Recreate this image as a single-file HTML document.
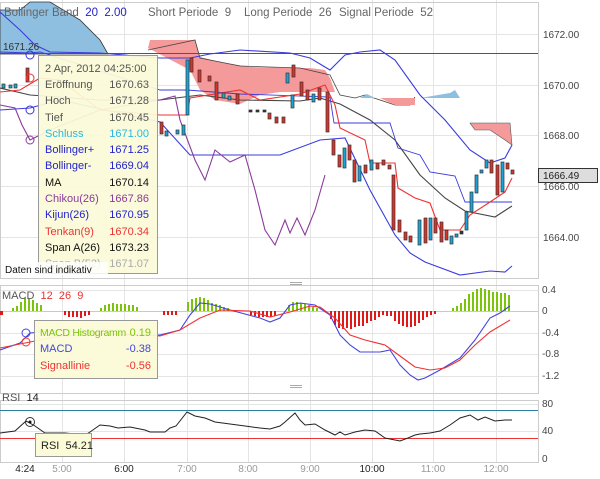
<!DOCTYPE html>
<html><head><meta charset="utf-8"><style>
html,body{margin:0;padding:0;background:#fff}
svg{display:block;font-family:"Liberation Sans",sans-serif}
</style></head><body>
<svg width="600" height="479" viewBox="0 0 600 479" xmlns="http://www.w3.org/2000/svg">
<rect width="600" height="479" fill="#fff"/>
<g stroke="#e4e4e4" stroke-width="1">
<line x1="0" y1="34.5" x2="538" y2="34.5"/><line x1="0" y1="85.5" x2="538" y2="85.5"/><line x1="0" y1="135.5" x2="538" y2="135.5"/><line x1="0" y1="186.5" x2="538" y2="186.5"/><line x1="0" y1="237.5" x2="538" y2="237.5"/>
<line x1="62.5" y1="0" x2="62.5" y2="462"/><line x1="124.5" y1="0" x2="124.5" y2="462"/><line x1="187.5" y1="0" x2="187.5" y2="462"/><line x1="248.5" y1="0" x2="248.5" y2="462"/><line x1="310.5" y1="0" x2="310.5" y2="462"/><line x1="372.5" y1="0" x2="372.5" y2="462"/><line x1="433.5" y1="0" x2="433.5" y2="462"/><line x1="496.5" y1="0" x2="496.5" y2="462"/>
<line x1="0" y1="290.5" x2="538" y2="290.5"/><line x1="0" y1="333.5" x2="538" y2="333.5"/><line x1="0" y1="354.5" x2="538" y2="354.5"/><line x1="0" y1="376.5" x2="538" y2="376.5"/>
<line x1="0" y1="404.5" x2="538" y2="404.5"/><line x1="0" y1="431.5" x2="538" y2="431.5"/>
</g>
<g stroke="#ccc" fill="none"><rect x="0.5" y="2.5" width="538" height="276"/><rect x="0.5" y="285.5" width="538" height="108"/><rect x="0.5" y="400.5" width="538" height="62"/></g>
<path d="M0,10 L20,10 L30,2 L50,2 L80,20 L100,40 L108,54 L0,54 Z" fill="#8fbfe0" stroke="#333" stroke-width="0.8"/>
<path d="M148,48 L150,40 L195,40 L200,57 L220,62 L250,67 L290,68 L310,68 L325,70 L330,78 L335,92 L280,92 L260,95 L240,104 L215,100 L200,90 L190,70 Z" fill="#f49a9a"/>
<path d="M148,50 L195,40 L200,58 L240,66 L300,68 L330,75 L340,95 L355,98 L365,95 L380,100 L395,105 L410,105 L415,97" fill="none" stroke="#444" stroke-width="0.8"/>
<path d="M380,98 L415,98 L415,105 L395,105 Z" fill="#f49a9a"/>
<path d="M360,98 L367,94 L375,98 Z M420,98 L450,93 L455,90 L460,98 Z" fill="#8fbfe0"/>
<path d="M470,123 L510,123 L512,145 L505,140 L490,130 L475,130 Z" fill="#f49a9a" stroke="#555" stroke-width="0.6"/>
<line x1="0" y1="53.5" x2="538" y2="53.5" stroke="#555"/>
<g fill="none" stroke-width="1.1">
<path d="M0,12 L20,30 L35,45 L50,52 L100,53 L160,58 L190,58 L210,54 L240,50 L290,53 L310,58 L330,70 L345,55 L360,52 L380,50 L395,60 L420,95 L445,120 L470,150 L490,163 L505,158 L512,145" stroke="#3b3bde"/>
<path d="M0,110 L30,108 L60,100 L160,122 L190,155 L280,155 L320,140 L345,138 L370,190 L395,235 L410,253 L425,262 L460,275 L490,271 L505,272 L512,266" stroke="#3b3bde"/>
<path d="M0,88 L30,95 L100,100 L160,100 L200,95 L240,100 L300,101 L320,98 L340,104 L370,120 L395,140 L420,175 L445,198 L465,211 L495,217 L512,206" stroke="#444"/>
<path d="M0,52 L30,53 L40,52 L160,90 L187,90 L240,94 L330,97 L334,123 L390,123 L398,148 L420,155 L430,172 L455,176 L465,202 L512,202" stroke="#3b3bde" stroke-width="0.9"/>
<path d="M0,92 L20,90 L40,78 L60,80 L100,110 L160,115 L187,115 L190,98 L240,90 L260,100 L300,94 L325,85 L335,105 L340,128 L365,140 L370,163 L395,163 L398,188 L415,198 L430,203 L440,230 L460,230 L470,215 L490,202 L505,192 L512,178" stroke="#e33"/>
<path d="M0,105 L15,108 L22,125 L30,140 L50,130 L100,110 L160,100 L175,96 L180,120 L195,160 L205,180 L215,150 L230,162 L245,155 L255,190 L265,230 L275,245 L285,220 L290,233 L297,218 L305,235 L315,210 L325,175" stroke="#8a3a9a"/>
</g>
<g stroke="#333" stroke-width="0.7">
<rect x="2" y="84" width="3" height="4" fill="#1aa3d9"/><rect x="9" y="85" width="3" height="3" fill="#1aa3d9"/><rect x="14" y="84" width="3" height="4" fill="#1aa3d9"/><rect x="26" y="68" width="3" height="14" fill="#d9342b"/>
<rect x="160" y="122" width="3" height="12" fill="#d9342b"/><rect x="165" y="131" width="3" height="5" fill="#1aa3d9"/><rect x="176" y="130" width="3" height="4" fill="#1aa3d9"/><rect x="182" y="125" width="3" height="10" fill="#1aa3d9"/>
<rect x="186" y="60" width="3" height="55" fill="#1aa3d9"/><rect x="190" y="58" width="3" height="14" fill="#d9342b"/><rect x="198" y="70" width="3" height="12" fill="#d9342b"/><rect x="208" y="76" width="3" height="5" fill="#d9342b"/><rect x="215" y="82" width="3" height="18" fill="#d9342b"/><rect x="222" y="93" width="3" height="5" fill="#1aa3d9"/><rect x="228" y="96" width="3" height="4" fill="#1aa3d9"/><rect x="236" y="94" width="3" height="10" fill="#d9342b"/><rect x="249" y="110" width="3" height="2" fill="#333"/><rect x="256" y="110" width="3" height="2" fill="#333"/><rect x="263" y="110" width="3" height="2" fill="#333"/><rect x="268" y="113" width="3" height="6" fill="#d9342b"/><rect x="275" y="117" width="3" height="6" fill="#d9342b"/><rect x="282" y="117" width="3" height="6" fill="#d9342b"/><rect x="291" y="95" width="3" height="13" fill="#1aa3d9"/><rect x="286" y="73" width="3" height="10" fill="#1aa3d9"/><rect x="292" y="65" width="3" height="12" fill="#d9342b"/><rect x="300" y="82" width="3" height="14" fill="#d9342b"/><rect x="306" y="90" width="3" height="10" fill="#d9342b"/><rect x="312" y="94" width="3" height="8" fill="#1aa3d9"/><rect x="318" y="88" width="3" height="12" fill="#d9342b"/>
<rect x="326" y="92" width="3" height="40" fill="#d9342b"/><rect x="332" y="140" width="3" height="15" fill="#d9342b"/><rect x="338" y="155" width="3" height="12" fill="#d9342b"/><rect x="343" y="148" width="3" height="20" fill="#1aa3d9"/><rect x="348" y="145" width="3" height="15" fill="#d9342b"/><rect x="353" y="160" width="3" height="22" fill="#d9342b"/><rect x="358" y="166" width="3" height="15" fill="#1aa3d9"/><rect x="364" y="165" width="3" height="8" fill="#d9342b"/><rect x="370" y="160" width="3" height="10" fill="#1aa3d9"/><rect x="376" y="163" width="3" height="6" fill="#d9342b"/><rect x="382" y="160" width="3" height="5" fill="#d9342b"/><rect x="388" y="165" width="3" height="4" fill="#d9342b"/>
<rect x="392" y="175" width="3" height="55" fill="#d9342b"/><rect x="398" y="220" width="3" height="12" fill="#d9342b"/><rect x="404" y="232" width="3" height="8" fill="#d9342b"/><rect x="409" y="236" width="3" height="6" fill="#d9342b"/><rect x="418" y="220" width="3" height="25" fill="#1aa3d9"/><rect x="424" y="218" width="3" height="25" fill="#d9342b"/><rect x="429" y="218" width="3" height="22" fill="#1aa3d9"/><rect x="434" y="218" width="3" height="15" fill="#d9342b"/><rect x="440" y="222" width="3" height="20" fill="#d9342b"/><rect x="445" y="230" width="3" height="10" fill="#d9342b"/><rect x="450" y="236" width="3" height="8" fill="#1aa3d9"/><rect x="455" y="234" width="3" height="3" fill="#1aa3d9"/><rect x="460" y="231" width="3" height="3" fill="#333"/><rect x="465" y="212" width="3" height="18" fill="#1aa3d9"/><rect x="470" y="192" width="3" height="20" fill="#1aa3d9"/><rect x="475" y="175" width="3" height="18" fill="#1aa3d9"/><rect x="480" y="170" width="3" height="3" fill="#1aa3d9"/><rect x="485" y="160" width="3" height="8" fill="#1aa3d9"/><rect x="490" y="160" width="3" height="13" fill="#d9342b"/><rect x="496" y="165" width="3" height="30" fill="#d9342b"/><rect x="501" y="162" width="3" height="30" fill="#1aa3d9"/><rect x="506" y="163" width="3" height="6" fill="#d9342b"/><rect x="511" y="170" width="3" height="4" fill="#d9342b"/>
</g>
<g fill="none" stroke-width="1"><circle cx="30" cy="55" r="4" stroke="#33d"/><circle cx="30" cy="110" r="4" stroke="#33d"/><circle cx="30" cy="140" r="4" stroke="#8a3a9a"/><circle cx="30" cy="78" r="4" stroke="#e33"/></g>
<text x="3" y="50" font-size="10" fill="#333">1671.26</text>
<g font-size="11.5" fill="#666">
<text x="4" y="16" xml:space="preserve">Bollinger Band  <tspan fill="#22c">20  2.00</tspan></text>
<text x="148" y="16" xml:space="preserve">Short Periode  9</text>
<text x="244" y="16" xml:space="preserve">Long Periode  26</text>
<text x="339" y="16" xml:space="preserve">Signal Periode  52</text>
</g>
<rect x="38.5" y="55.5" width="119" height="218" fill="#fbfbd8" fill-opacity="0.93" stroke="#999"/>
<g font-size="11">
<text x="45" y="72" fill="#555">2 Apr, 2012 04:25:00</text>
<text x="45" y="88" fill="#555">Eröffnung</text><text x="149" y="88" fill="#555" text-anchor="end">1670.63</text>
<text x="45" y="104" fill="#555">Hoch</text><text x="149" y="104" fill="#555" text-anchor="end">1671.28</text>
<text x="45" y="121" fill="#555">Tief</text><text x="149" y="121" fill="#555" text-anchor="end">1670.45</text>
<text x="45" y="137" fill="#2ab8e0">Schluss</text><text x="149" y="137" fill="#2ab8e0" text-anchor="end">1671.00</text>
<text x="45" y="153" fill="#22c">Bollinger+</text><text x="149" y="153" fill="#22c" text-anchor="end">1671.25</text>
<text x="45" y="169" fill="#22c">Bollinger-</text><text x="149" y="169" fill="#22c" text-anchor="end">1669.04</text>
<text x="45" y="186" fill="#111">MA</text><text x="149" y="186" fill="#111" text-anchor="end">1670.14</text>
<text x="45" y="202" fill="#8a3a9a">Chikou(26)</text><text x="149" y="202" fill="#8a3a9a" text-anchor="end">1667.86</text>
<text x="45" y="218" fill="#22c">Kijun(26)</text><text x="149" y="218" fill="#22c" text-anchor="end">1670.95</text>
<text x="45" y="235" fill="#e33">Tenkan(9)</text><text x="149" y="235" fill="#e33" text-anchor="end">1670.34</text>
<text x="45" y="251" fill="#111">Span A(26)</text><text x="149" y="251" fill="#111" text-anchor="end">1673.23</text>
<text x="45" y="267" fill="#aaa">Span B(52)</text><text x="149" y="267" fill="#aaa" text-anchor="end">1671.07</text>
</g>
<rect x="3" y="262" width="105" height="13" fill="#fff" fill-opacity="0.85"/>
<text x="5" y="273" font-size="10" fill="#111">Daten sind indikativ</text>
<g font-size="10" fill="#444"><text x="543" y="38">1672.00</text><text x="543" y="89">1670.00</text><text x="543" y="139">1668.00</text><text x="543" y="190">1666.00</text><text x="543" y="241">1664.00</text></g>
<rect x="538.5" y="168.5" width="59" height="14" fill="#ddd" stroke="#333"/>
<text x="543" y="179" font-size="10" fill="#222">1666.49</text>
<g stroke="#aaa"><line x1="290" y1="282.5" x2="302" y2="282.5"/><line x1="290" y1="284.5" x2="302" y2="284.5"/><line x1="290" y1="385.5" x2="302" y2="385.5"/><line x1="290" y1="387.5" x2="302" y2="387.5"/></g>
<line x1="0" y1="311.5" x2="538" y2="311.5" stroke="#bcd"/>
<g fill="#7cc40a"><rect x="12" y="308" width="2" height="3"/><rect x="16" y="306" width="2" height="5"/><rect x="20" y="302" width="2" height="9"/><rect x="24" y="298" width="2" height="13"/><rect x="28" y="299" width="2" height="12"/><rect x="32" y="300" width="2" height="11"/><rect x="36" y="303" width="2" height="8"/><rect x="40" y="305" width="2" height="6"/><rect x="100" y="308" width="2" height="3"/><rect x="104" y="305" width="2" height="6"/><rect x="108" y="304" width="2" height="7"/><rect x="112" y="303" width="2" height="8"/><rect x="116" y="304" width="2" height="7"/><rect x="120" y="304" width="2" height="7"/><rect x="124" y="304" width="2" height="7"/><rect x="128" y="305" width="2" height="6"/><rect x="132" y="305" width="2" height="6"/><rect x="136" y="307" width="2" height="4"/>
<rect x="187" y="302" width="2" height="9"/><rect x="191" y="299" width="2" height="12"/><rect x="195" y="298" width="2" height="13"/><rect x="199" y="297" width="2" height="14"/><rect x="203" y="298" width="2" height="13"/><rect x="207" y="300" width="2" height="11"/><rect x="211" y="303" width="2" height="8"/><rect x="215" y="304" width="2" height="7"/><rect x="219" y="305" width="2" height="6"/><rect x="223" y="307" width="2" height="4"/><rect x="227" y="308" width="2" height="3"/>
<rect x="288" y="305" width="2" height="6"/><rect x="292" y="302" width="2" height="9"/><rect x="296" y="302" width="2" height="9"/><rect x="300" y="303" width="2" height="8"/><rect x="304" y="304" width="2" height="7"/><rect x="308" y="305" width="2" height="6"/><rect x="312" y="307" width="2" height="4"/><rect x="316" y="308" width="2" height="3"/>
<rect x="452" y="308" width="2" height="3"/><rect x="456" y="306" width="2" height="5"/><rect x="460" y="303" width="2" height="8"/><rect x="464" y="299" width="2" height="12"/><rect x="468" y="294" width="2" height="17"/><rect x="472" y="292" width="2" height="19"/><rect x="476" y="289" width="2" height="22"/><rect x="480" y="288" width="2" height="23"/><rect x="484" y="289" width="2" height="22"/><rect x="488" y="290" width="2" height="21"/><rect x="492" y="292" width="2" height="19"/><rect x="496" y="292" width="2" height="19"/><rect x="500" y="293" width="2" height="18"/><rect x="504" y="293" width="2" height="18"/><rect x="508" y="295" width="2" height="16"/></g>
<g fill="#e01818"><rect x="0" y="311" width="3" height="4"/><rect x="64" y="311" width="2" height="4"/><rect x="68" y="311" width="2" height="6"/><rect x="72" y="311" width="2" height="6"/><rect x="76" y="311" width="2" height="6"/><rect x="80" y="311" width="2" height="7"/><rect x="84" y="311" width="2" height="5"/><rect x="88" y="311" width="2" height="4"/><rect x="163" y="311" width="2" height="4"/><rect x="167" y="311" width="2" height="4"/><rect x="171" y="311" width="2" height="4"/><rect x="175" y="311" width="2" height="4"/>
<rect x="250" y="311" width="2" height="4"/><rect x="254" y="311" width="2" height="5"/><rect x="258" y="311" width="2" height="6"/><rect x="262" y="311" width="2" height="6"/><rect x="266" y="311" width="2" height="6"/><rect x="270" y="311" width="2" height="6"/><rect x="274" y="311" width="2" height="5"/>
<rect x="330" y="311" width="2" height="8"/><rect x="334" y="311" width="2" height="14"/><rect x="338" y="311" width="2" height="17"/><rect x="342" y="311" width="2" height="18"/><rect x="346" y="311" width="2" height="17"/><rect x="350" y="311" width="2" height="18"/><rect x="354" y="311" width="2" height="16"/><rect x="358" y="311" width="2" height="15"/><rect x="362" y="311" width="2" height="15"/><rect x="366" y="311" width="2" height="12"/><rect x="370" y="311" width="2" height="10"/><rect x="374" y="311" width="2" height="9"/><rect x="378" y="311" width="2" height="6"/><rect x="382" y="311" width="2" height="4"/><rect x="386" y="311" width="2" height="5"/><rect x="390" y="311" width="2" height="5"/><rect x="394" y="311" width="2" height="10"/><rect x="398" y="311" width="2" height="13"/><rect x="402" y="311" width="2" height="15"/><rect x="406" y="311" width="2" height="16"/><rect x="410" y="311" width="2" height="16"/><rect x="414" y="311" width="2" height="15"/><rect x="418" y="311" width="2" height="12"/><rect x="422" y="311" width="2" height="9"/><rect x="426" y="311" width="2" height="6"/><rect x="430" y="311" width="2" height="4"/><rect x="434" y="311" width="2" height="3"/></g>
<g fill="none" stroke-width="1.1">
<path d="M0,350 L20,343 L30,333 L60,330 L120,335 L160,335 L180,330 L190,315 L200,303 L210,304 L230,310 L260,318 L270,322 L280,318 L290,305 L300,303 L315,305 L330,315 L340,335 L350,345 L360,352 L380,352 L390,350 L400,365 L410,375 L418,380 L425,378 L440,370 L460,358 L475,340 L490,318 L500,313 L510,306" stroke="#44d"/>
<path d="M0,348 L30,342 L60,336 L120,334 L160,336 L180,330 L200,318 L220,310 L250,311 L270,317 L290,312 L310,306 L320,307 L335,318 L350,335 L365,340 L385,345 L400,356 L415,367 L430,370 L445,368 L460,360 L475,345 L490,332 L510,320" stroke="#e33"/>
</g>
<g font-size="10" fill="#444"><text x="542" y="293">0.4</text><text x="542" y="314">0</text><text x="542" y="336">-0.4</text><text x="542" y="357">-0.8</text><text x="542" y="379">-1.2</text></g>
<text x="2" y="299" font-size="11" fill="#555" xml:space="preserve">MACD  <tspan fill="#e33">12  26  9</tspan></text>
<circle cx="26" cy="333" r="4" fill="none" stroke="#44d"/><circle cx="26" cy="342" r="4" fill="none" stroke="#e33"/>
<rect x="34.5" y="320.5" width="123" height="58" fill="#fbfbd8" fill-opacity="0.95" stroke="#999"/>
<g font-size="11"><text x="40" y="336" fill="#7cc40a" font-size="10.5" letter-spacing="-0.3">MACD Histogramm</text><text x="151" y="336" fill="#7cc40a" text-anchor="end">0.19</text>
<text x="40" y="352" fill="#44d">MACD</text><text x="151" y="352" fill="#44d" text-anchor="end">-0.38</text>
<text x="40" y="369" fill="#e33">Signallinie</text><text x="151" y="369" fill="#e33" text-anchor="end">-0.56</text></g>
<line x1="0" y1="410.5" x2="538" y2="410.5" stroke="#2a7fa0"/>
<line x1="0" y1="438.5" x2="538" y2="438.5" stroke="#e33"/>
<path d="M0,433 L15,431 L26,421 L35,426 L45,433 L55,433 L65,433 L75,434 L80,438 L90,432 L100,425 L110,426 L118,428 L130,427 L145,430 L150,432 L165,432 L170,428 L176,426 L187,412 L195,416 L205,418 L215,422 L230,424 L245,426 L260,428 L270,429 L280,426 L285,422 L295,413 L300,420 L305,425 L315,424 L325,430 L335,435 L340,432 L345,435 L355,432 L365,430 L375,431 L385,438 L400,441 L408,438 L415,435 L420,434 L430,433 L440,431 L450,425 L460,418 L470,415 L478,420 L485,417 L495,421 L505,420 L512,420" fill="none" stroke="#222" stroke-width="1"/>
<circle cx="30" cy="422" r="4.5" fill="none" stroke="#333"/><circle cx="30" cy="422" r="1.5" fill="#111"/>
<g font-size="10" fill="#444"><text x="542" y="407">80</text><text x="542" y="434">40</text><text x="542" y="462">0</text></g>
<text x="2" y="401" font-size="11" fill="#555" xml:space="preserve">RSI  <tspan fill="#222">14</tspan></text>
<rect x="35.5" y="433.5" width="56" height="23" fill="#fbfbd8" stroke="#999"/>
<text x="41" y="449" font-size="11" fill="#222" xml:space="preserve">RSI  54.21</text>
<g font-size="10" text-anchor="middle"><text x="25" y="472" fill="#222">4:24</text><text x="62" y="472" fill="#999">5:00</text><text x="124" y="472" fill="#222">6:00</text><text x="187" y="472" fill="#999">7:00</text><text x="248" y="472" fill="#999">8:00</text><text x="310" y="472" fill="#999">9:00</text><text x="372" y="472" fill="#222">10:00</text><text x="433" y="472" fill="#999">11:00</text><text x="496" y="472" fill="#999">12:00</text></g>
</svg>
</body></html>
